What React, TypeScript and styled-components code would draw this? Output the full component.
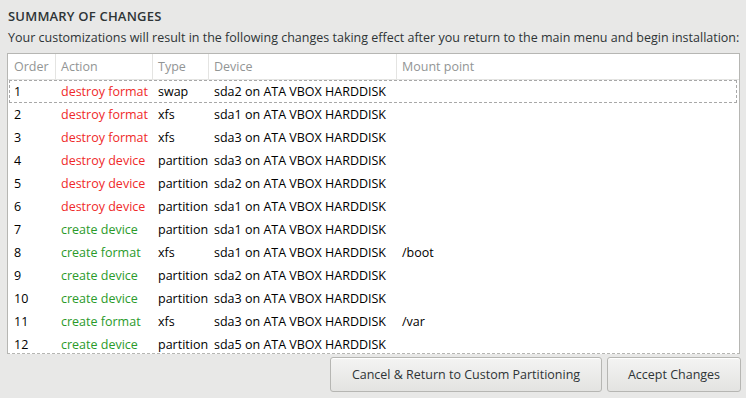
import React from 'react';
import styled, { createGlobalStyle } from 'styled-components';

const GlobalStyle = createGlobalStyle`
  html, body {
    margin: 0;
    padding: 0;
    background: #e8e8e7;
  }
  body {
    font-family: 'Open Sans', 'Noto Sans', sans-serif;
    font-size: 12.5px;
    color: #2e3436;
  }
`;

const Page = styled.div`
  width: 746px;
  height: 398px;
  box-sizing: border-box;
  padding: 6px 6px 0 7px;
  display: flex;
  flex-direction: column;
`;

const Title = styled.div`
  font-size: 13px;
  font-weight: 600;
  letter-spacing: 0.2px;
  line-height: 20px;
  padding-left: 1px;
`;

const Description = styled.div`
  line-height: 20px;
  margin-top: 2px;
  padding-left: 1px;
  white-space: nowrap;
`;

const TableBox = styled.div`
  margin-top: 5px;
  width: 733px;
  height: 301px;
  box-sizing: border-box;
  background: #ffffff;
  border: 1px solid #b6b6b3;
  border-bottom: 1px dashed #b6b6b3;
  overflow: hidden;
`;

const cols = '47px 97px 56px 188px 1fr';

const HeaderRow = styled.div`
  display: grid;
  grid-template-columns: ${cols};
  height: 25px;
  border-bottom: 1px solid #e4e4e2;
`;

const HeaderCell = styled.div<{ $first?: boolean }>`
  display: flex;
  align-items: center;
  padding-left: ${({ $first }) => ($first ? '6px' : '5px')};
  color: #929595;
  border-left: ${({ $first }) => ($first ? 'none' : '1px solid #e4e4e2')};
`;

const Row = styled.div<{ $focus?: boolean }>`
  display: grid;
  grid-template-columns: ${cols};
  height: 23px;
  margin: 0 2px 0 1px;
  box-sizing: border-box;
  border: 1px dashed ${({ $focus }) => ($focus ? '#a8a8a8' : 'transparent')};
  &:first-of-type {
    margin-top: 1px;
  }
`;

const Cell = styled.div<{ $tone?: 'destroy' | 'create' }>`
  display: flex;
  align-items: center;
  padding-left: 4px;
  white-space: nowrap;
  color: ${({ $tone }) =>
    $tone === 'destroy' ? '#ef2929' : $tone === 'create' ? '#2a9a2a' : '#000000'};
`;

const Footer = styled.div`
  display: flex;
  justify-content: flex-end;
  gap: 5px;
  margin-top: 3px;
  width: 734px;
`;

const Button = styled.button<{ $width: number }>`
  width: ${({ $width }) => $width}px;
  height: 35px;
  font-family: inherit;
  font-size: 12.5px;
  color: #2e3436;
  border: 1px solid #b6b6b3;
  border-radius: 3px;
  background: linear-gradient(#f4f4f3, #e3e3e1);
  box-shadow: inset 0 1px #ffffff;
  padding: 0;
`;

type Change = [string, string, string, string];

const changes: Change[] = [
  ['destroy format', 'swap', 'sda2', ''],
  ['destroy format', 'xfs', 'sda1', ''],
  ['destroy format', 'xfs', 'sda3', ''],
  ['destroy device', 'partition', 'sda3', ''],
  ['destroy device', 'partition', 'sda2', ''],
  ['destroy device', 'partition', 'sda1', ''],
  ['create device', 'partition', 'sda1', ''],
  ['create format', 'xfs', 'sda1', '/boot'],
  ['create device', 'partition', 'sda2', ''],
  ['create device', 'partition', 'sda3', ''],
  ['create format', 'xfs', 'sda3', '/var'],
  ['create device', 'partition', 'sda5', ''],
];

export default function App() {
  return (
    <>
      <GlobalStyle />
      <Page>
        <Title>SUMMARY OF CHANGES</Title>
        <Description>
          Your customizations will result in the following changes taking effect after you return to
          the main menu and begin installation:
        </Description>
        <TableBox>
          <HeaderRow>
            <HeaderCell $first>Order</HeaderCell>
            <HeaderCell>Action</HeaderCell>
            <HeaderCell>Type</HeaderCell>
            <HeaderCell>Device</HeaderCell>
            <HeaderCell>Mount point</HeaderCell>
          </HeaderRow>
          {changes.map(([action, type, dev, mount], i) => (
            <Row key={i} $focus={i === 0}>
              <Cell>{i + 1}</Cell>
              <Cell $tone={action.startsWith('destroy') ? 'destroy' : 'create'}>{action}</Cell>
              <Cell>{type}</Cell>
              <Cell>{dev} on ATA VBOX HARDDISK</Cell>
              <Cell>{mount}</Cell>
            </Row>
          ))}
        </TableBox>
        <Footer>
          <Button $width={272}>Cancel &amp; Return to Custom Partitioning</Button>
          <Button $width={134}>Accept Changes</Button>
        </Footer>
      </Page>
    </>
  );
}
